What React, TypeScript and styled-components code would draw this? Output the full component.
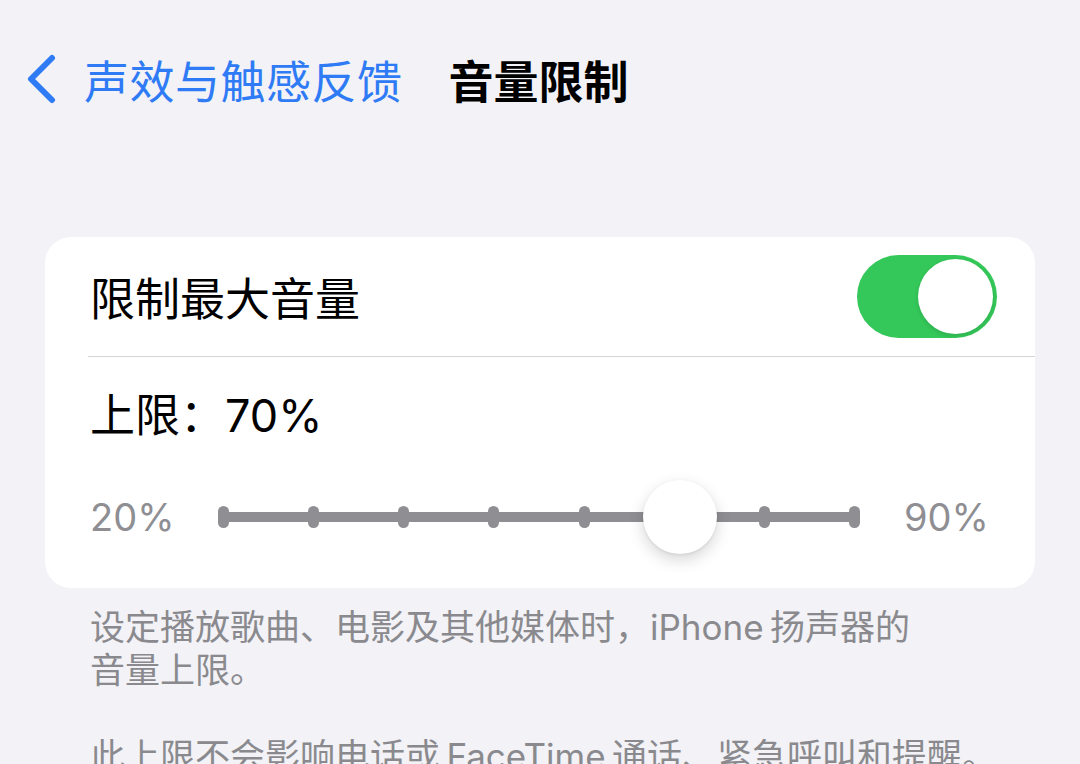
import React from "react";
import styled, { createGlobalStyle } from "styled-components";

const GlobalStyle = createGlobalStyle`
  html, body {
    margin: 0;
    padding: 0;
    background: #f2f2f7;
  }
  body {
    font-family: "Inter", "Noto Sans CJK SC", "Noto Sans", sans-serif;
    -webkit-font-smoothing: antialiased;
  }
`;

const Page = styled.div`
  width: 1080px;
  height: 764px;
  overflow: hidden;
  background: #f2f2f7;
`;

const NavBar = styled.div`
  height: 158px;
  display: flex;
  align-items: center;
  padding-left: 24px;
  box-sizing: border-box;
`;

const BackButton = styled.div`
  display: flex;
  align-items: center;
  gap: 26px;
  color: #2f7bf5;
  font-size: 45px;
  letter-spacing: 0.5px;
`;

const Title = styled.div`
  margin-left: 46px;
  font-size: 45px;
  font-weight: 700;
  color: #000;
`;

const Card = styled.div`
  margin: 79px 45px 0;
  background: #fff;
  border-radius: 26px;
  overflow: hidden;
`;

const Row = styled.div<{ $h: number }>`
  height: ${(p) => p.$h}px;
  display: flex;
  align-items: center;
  justify-content: space-between;
  padding: 0 38px 0 45px;
  box-sizing: border-box;
`;

const Label = styled.div`
  font-size: 45px;
  color: #000;
`;

const Divider = styled.div`
  height: 1px;
  margin-left: 43px;
  background: #d4d4d8;
`;

const Toggle = styled.div`
  width: 140px;
  height: 83px;
  border-radius: 42px;
  background: #34c759;
  display: flex;
  align-items: center;
  justify-content: flex-end;
  padding: 0 4px;
  box-sizing: border-box;
`;

const Knob = styled.div`
  width: 75px;
  height: 75px;
  border-radius: 50%;
  background: #fff;
  box-shadow: 0 2px 4px rgba(0, 0, 0, 0.12);
`;

const LimitBlock = styled.div`
  height: 231px;
  padding: 0 45px;
  box-sizing: border-box;
  display: flex;
  flex-direction: column;
`;

const LimitTitle = styled(Label)`
  margin-top: 32px;
  height: 54px;
  line-height: 54px;
`;

const SliderRow = styled.div`
  margin-top: 44px;
  display: flex;
  align-items: center;
  height: 60px;
`;

const Edge = styled.div`
  font-size: 38px;
  color: #8e8e93;
  width: 84px;
`;

const TrackWrap = styled.div`
  position: relative;
  width: 642px;
  height: 60px;
  margin: 0 44px;
`;

const Track = styled.div`
  position: absolute;
  left: 0;
  right: 0;
  top: 25px;
  height: 10px;
  border-radius: 5px;
  background: #8e8e93;
`;

const Ticks = styled.div`
  position: absolute;
  left: 0;
  right: 0;
  top: 19px;
  height: 22px;
  display: flex;
  justify-content: space-between;
`;

const Tick = styled.div`
  width: 11px;
  height: 22px;
  border-radius: 6px;
  background: #8e8e93;
`;

const Thumb = styled.div`
  position: absolute;
  top: -7px;
  width: 74px;
  height: 74px;
  margin-left: -34px;
  border-radius: 50%;
  background: #fff;
  box-shadow: 0 6px 16px rgba(0, 0, 0, 0.16), 0 1px 3px rgba(0, 0, 0, 0.08);
`;

const Footer = styled.div`
  padding: 18px 40px 0 90px;
  color: #8a8a8e;
  font-size: 35px;
  line-height: 43px;
`;

const Para = styled.p`
  margin: 0 0 43px;
`;

const Chevron = () => (
  <svg width="34" height="50" viewBox="0 0 34 50">
    <polyline
      points="28,4 7,25 28,46"
      fill="none"
      stroke="#2f7bf5"
      strokeWidth="6"
      strokeLinecap="round"
      strokeLinejoin="round"
    />
  </svg>
);

const steps = [20, 30, 40, 50, 60, 70, 80, 90];

export default function App() {
  const value = 70;
  const pct = ((value - 20) / 70) * 100;
  return (
    <>
      <GlobalStyle />
      <Page>
        <NavBar>
          <BackButton>
            <Chevron />
            <span>声效与触感反馈</span>
          </BackButton>
          <Title>音量限制</Title>
        </NavBar>

        <Card>
          <Row $h={119}>
            <Label>限制最大音量</Label>
            <Toggle>
              <Knob />
            </Toggle>
          </Row>
          <Divider />
          <LimitBlock>
            <LimitTitle>上限：{value}%</LimitTitle>
            <SliderRow>
              <Edge>20%</Edge>
              <TrackWrap>
                <Track />
                <Ticks>
                  {steps.map((s) => (
                    <Tick key={s} style={{ visibility: s === value ? "hidden" : "visible" }} />
                  ))}
                </Ticks>
                <Thumb style={{ left: `${pct}%` }} />
              </TrackWrap>
              <Edge>90%</Edge>
            </SliderRow>
          </LimitBlock>
        </Card>

        <Footer>
          <Para>
            设定播放歌曲、电影及其他媒体时，iPhone{"\u2009"}扬声器的
            <br />
            音量上限。
          </Para>
          <Para>此上限不会影响电话或{"\u2009"}FaceTime{"\u2009"}通话、紧急呼叫和提醒。</Para>
        </Footer>
      </Page>
    </>
  );
}
